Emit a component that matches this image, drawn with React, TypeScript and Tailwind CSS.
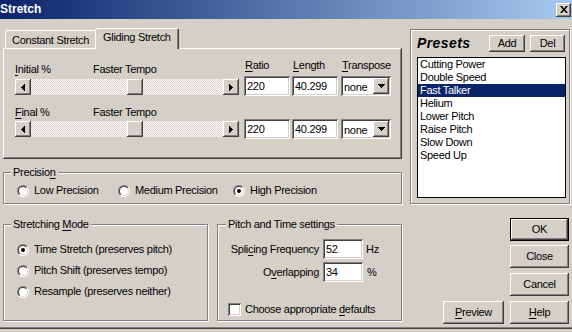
import React from "react";

const RAISED =
  "shadow-[inset_-1px_-1px_#404040,inset_1px_1px_#ffffff,inset_-2px_-2px_#808080,inset_2px_2px_#d4d0c8]";
const SUNKEN =
  "shadow-[inset_1px_1px_#808080,inset_-1px_-1px_#ffffff,inset_2px_2px_#404040,inset_-2px_-2px_#d4d0c8]";
const ETCHED = "border border-[#808080] shadow-[inset_1px_1px_#ffffff,1px_1px_#ffffff]";

function U({ children }: { children: React.ReactNode }) {
  return <span className="underline underline-offset-[2px] decoration-1">{children}</span>;
}

function Btn({
  children,
  className = "",
  isDefault = false,
}: {
  children: React.ReactNode;
  className?: string;
  isDefault?: boolean;
}) {
  return (
    <div
      className={`flex items-center justify-center h-[23px] bg-[#d4d0c8] ${RAISED} ${
        isDefault ? "border border-black" : ""
      } ${className}`}
    >
      {children}
    </div>
  );
}

function ArrowLeft() {
  return (
    <svg width="4" height="7" viewBox="0 0 4 7" shapeRendering="crispEdges">
      <path d="M4 0V7L0 3.5Z" fill="#000" />
    </svg>
  );
}
function ArrowRight() {
  return (
    <svg width="4" height="7" viewBox="0 0 4 7" shapeRendering="crispEdges">
      <path d="M0 0V7L4 3.5Z" fill="#000" />
    </svg>
  );
}
function ArrowDown() {
  return (
    <svg width="7" height="4" viewBox="0 0 7 4" shapeRendering="crispEdges">
      <path d="M0 0H7L3.5 4Z" fill="#000" />
    </svg>
  );
}

function Slider() {
  return (
    <div className="flex h-[16px] w-[224px]">
      <div className={`w-[16px] h-[16px] shrink-0 bg-[#d4d0c8] flex items-center justify-center ${RAISED}`}>
        <ArrowLeft />
      </div>
      <div className="flex-1 h-[16px] bg-[image:repeating-conic-gradient(#ffffff_0%_25%,#d4d0c8_0%_50%)] bg-[length:2px_2px]">
        <div className={`ml-[96px] w-[16px] h-[16px] bg-[#d4d0c8] ${RAISED}`} />
      </div>
      <div className={`w-[16px] h-[16px] shrink-0 bg-[#d4d0c8] flex items-center justify-center ${RAISED}`}>
        <ArrowRight />
      </div>
    </div>
  );
}

function Edit({ value, w }: { value: string; w: string }) {
  return (
    <div className={`${w} h-[20px] bg-white ${SUNKEN} pl-[3px] flex items-center`}>{value}</div>
  );
}

function Combo() {
  return (
    <div className={`w-[50px] h-[20px] bg-white ${SUNKEN} flex items-center pl-[3px] pr-[2px]`}>
      <span className="flex-1 pt-[2px]">none</span>
      <div className={`w-[16px] h-[16px] bg-[#d4d0c8] flex items-center justify-center ${RAISED}`}>
        <ArrowDown />
      </div>
    </div>
  );
}

function Radio({ checked = false }: { checked?: boolean }) {
  return (
    <svg width="12" height="12" viewBox="0 0 12 12" className="shrink-0">
      <defs>
        <linearGradient id="rdo" x1="0" y1="0" x2="1" y2="1">
          <stop offset="0.5" stopColor="#808080" />
          <stop offset="0.5" stopColor="#ffffff" />
        </linearGradient>
        <linearGradient id="rdi" x1="0" y1="0" x2="1" y2="1">
          <stop offset="0.5" stopColor="#404040" />
          <stop offset="0.5" stopColor="#d4d0c8" />
        </linearGradient>
      </defs>
      <circle cx="6" cy="6" r="6" fill="url(#rdo)" />
      <circle cx="6" cy="6" r="5" fill="url(#rdi)" />
      <circle cx="6" cy="6" r="4" fill="#ffffff" />
      {checked && <circle cx="6" cy="6" r="2" fill="#000000" />}
    </svg>
  );
}

function RadioItem({
  label,
  checked = false,
  w,
}: {
  label: React.ReactNode;
  checked?: boolean;
  w?: string;
}) {
  return (
    <div className={`flex items-center h-[13px] ${w ?? ""}`}>
      <Radio checked={checked} />
      <span className="ml-[5px] whitespace-nowrap">{label}</span>
    </div>
  );
}

const presets = [
  "Cutting Power",
  "Double Speed",
  "Fast Talker",
  "Helium",
  "Lower Pitch",
  "Raise Pitch",
  "Slow Down",
  "Speed Up",
];

export default function App() {
  return (
    <div className="w-[572px] h-[332px] overflow-hidden bg-[#d4d0c8] text-black text-[11px] leading-[13px] tracking-[-0.3px] font-['Liberation_Sans',Arial,sans-serif] flex flex-col">
      {/* Title bar */}
      <div className="h-[19px] shrink-0 flex items-center justify-between bg-[linear-gradient(to_right,#0a246a,#a6caf0)] pr-[1px]">
        <span className="text-white font-bold text-[12px] tracking-normal">Stretch</span>
        <div className={`w-[15px] h-[14px] bg-[#d4d0c8] flex items-center justify-center ${RAISED}`}>
          <svg width="8" height="7" viewBox="0 0 8 7">
            <path d="M0 0H2L4 2.4L6 0H8L5 3.5L8 7H6L4 4.6L2 7H0L3 3.5Z" fill="#000" />
          </svg>
        </div>
      </div>

      {/* Top row */}
      <div className="flex pl-[3px] pt-[9px]">
        {/* Left column */}
        <div className="w-[399px] flex flex-col">
          {/* Tabs */}
          <div className="h-[20px] flex items-end pl-[2px]">
            <div className="w-[92px] h-[18px] rounded-t-[2px] shadow-[inset_1px_1px_#ffffff,inset_-1px_0_#404040,inset_-2px_0_#808080] pl-[7px] pt-[4px] whitespace-nowrap">
              Constant Stretch
            </div>
            <div className="relative z-10 ml-[-2px] mb-[-1px] w-[84px] h-[21px] bg-[#d4d0c8] rounded-t-[2px] shadow-[inset_1px_1px_#ffffff,inset_-1px_0_#404040,inset_-2px_0_#808080] pl-[8px] pt-[3px] whitespace-nowrap">
              Gliding Stretch
            </div>
          </div>
          {/* Panel */}
          <div className="h-[111px] w-[399px] shadow-[inset_-1px_-1px_#404040,inset_1px_1px_#ffffff,inset_-2px_-2px_#808080] pl-[12px]">
            {/* Row 1 */}
            <div className="flex mt-[11px]">
              <div className="flex flex-col w-[224px]">
                <div className="mt-[4px] h-[13px] flex">
                  <span className="w-[78px]">
                    <U>I</U>nitial %
                  </span>
                  <span>Faster Tempo</span>
                </div>
                <div className="mt-[3px]">
                  <Slider />
                </div>
              </div>
              <div className="ml-[5px] flex flex-col">
                <div className="h-[13px] pl-[1px]">
                  <U>R</U>atio
                </div>
                <div className="mt-[4px]">
                  <Edit value="220" w="w-[46px]" />
                </div>
              </div>
              <div className="ml-[2px] flex flex-col">
                <div className="h-[13px] pl-[1px]">
                  <U>L</U>ength
                </div>
                <div className="mt-[4px]">
                  <Edit value="40.299" w="w-[46px]" />
                </div>
              </div>
              <div className="ml-[3px] flex flex-col">
                <div className="h-[13px] pl-[1px] whitespace-nowrap">
                  <U>T</U>ranspose
                </div>
                <div className="mt-[4px]">
                  <Combo />
                </div>
              </div>
            </div>
            {/* Row 2 */}
            <div className="flex mt-[10px]">
              <div className="flex flex-col w-[224px]">
                <div className="h-[13px] flex">
                  <span className="w-[78px]">
                    <U>F</U>inal %
                  </span>
                  <span>Faster Tempo</span>
                </div>
                <div className="mt-[2px]">
                  <Slider />
                </div>
              </div>
              <div className="ml-[5px] mt-[13px]">
                <Edit value="220" w="w-[46px]" />
              </div>
              <div className="ml-[2px] mt-[13px]">
                <Edit value="40.299" w="w-[46px]" />
              </div>
              <div className="ml-[3px] mt-[13px]">
                <Combo />
              </div>
            </div>
          </div>
          {/* Precision */}
          <div className={`mt-[13px] h-[32px] ${ETCHED}`}>
            <div className="mt-[-7px] ml-[7px] px-[2px] w-fit bg-[#d4d0c8]">
              Precisio<U>n</U>
            </div>
            <div className="flex mt-[5px] ml-[13px]">
              <RadioItem label="Low Precision" w="w-[101px]" />
              <RadioItem label="Medium Precision" w="w-[115px]" />
              <RadioItem label="High Precision" checked />
            </div>
          </div>
        </div>

        {/* Presets */}
        <div className={`ml-[8px] mt-[1px] w-[160px] h-[175px] ${ETCHED} pl-[6px] pt-[5px]`}>
          <div className="flex items-center h-[17px]">
            <span className="w-[72px] font-bold italic text-[14px] tracking-[0.4px]">Presets</span>
            <Btn className="w-[36px] !h-[17px]">Add</Btn>
            <Btn className="ml-[5px] w-[35px] !h-[17px]">Del</Btn>
          </div>
          <div className="mt-[5px] w-[149px] h-[141px] bg-white border border-black">
            {presets.map((p) => (
              <div
                key={p}
                className={`h-[13px] pl-[2px] whitespace-nowrap ${
                  p === "Fast Talker" ? "bg-[#0a246a] text-white" : ""
                }`}
              >
                {p}
              </div>
            ))}
          </div>
        </div>
      </div>

      {/* Bottom row */}
      <div className="flex pl-[3px] mt-[14px]">
        {/* Stretching Mode */}
        <div className={`mt-[6px] w-[205px] h-[97px] ${ETCHED}`}>
          <div className="mt-[-7px] ml-[7px] px-[2px] w-fit bg-[#d4d0c8]">
            Stretching <U>M</U>ode
          </div>
          <div className="flex flex-col gap-[8px] mt-[12px] ml-[13px]">
            <RadioItem label="Time Stretch (preserves pitch)" checked />
            <RadioItem label="Pitch Shift (preserves tempo)" />
            <RadioItem label="Resample (preserves neither)" />
          </div>
        </div>

        {/* Pitch and Time */}
        <div className={`ml-[9px] mt-[6px] w-[185px] h-[97px] ${ETCHED}`}>
          <div className="mt-[-7px] ml-[8px] px-[2px] w-fit bg-[#d4d0c8]">Pitch and Time settings</div>
          <div className="flex items-center mt-[8px]">
            <div className="w-[101px] text-right whitespace-nowrap">
              Spli<U>c</U>ing Frequency
            </div>
            <div className="ml-[4px]">
              <Edit value="52" w="w-[40px]" />
            </div>
            <span className="ml-[3px]">Hz</span>
          </div>
          <div className="flex items-center mt-[3px]">
            <div className="w-[101px] text-right whitespace-nowrap">
              O<U>v</U>erlapping
            </div>
            <div className="ml-[4px]">
              <Edit value="34" w="w-[40px]" />
            </div>
            <span className="ml-[4px]">%</span>
          </div>
          <div className="flex items-center mt-[21px] ml-[10px]">
            <div className={`w-[13px] h-[13px] bg-white ${SUNKEN}`} />
            <span className="ml-[4px] whitespace-nowrap">
              Choose appropriate <U>d</U>efaults
            </span>
          </div>
        </div>

        {/* Buttons */}
        <div className="ml-[41px] flex items-end">
          <Btn className="w-[61px]">
            <span>
              <U>P</U>review
            </span>
          </Btn>
          <div className="ml-[6px] flex flex-col">
            <Btn className="w-[59px]" isDefault>
              OK
            </Btn>
            <Btn className="w-[59px] mt-[4px]">Close</Btn>
            <Btn className="w-[59px] mt-[5px]">Cancel</Btn>
            <Btn className="w-[59px] mt-[5px]">
              <span>
                <U>H</U>elp
              </span>
            </Btn>
          </div>
        </div>
      </div>

      {/* Window bottom edge */}
      <div className="mt-auto h-[5px] shadow-[inset_0_1px_#808080,inset_0_2px_#404040]" />
    </div>
  );
}
